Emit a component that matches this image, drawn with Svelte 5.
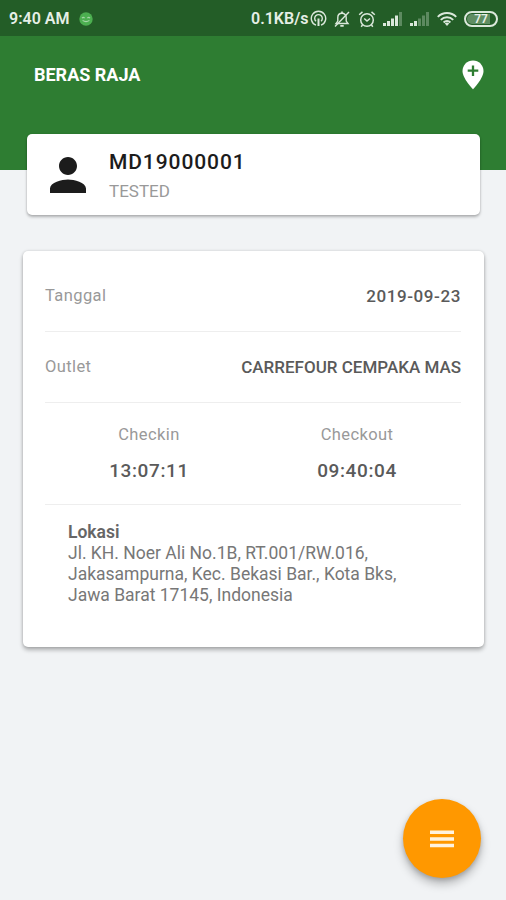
<script>
  let time = '9:40 AM'
  let speed = '0.1KB/s'
  let battery = 77

  let title = 'BERAS RAJA'
  let user = { code: 'MD19000001', name: 'TESTED' }

  let rows = [
    { label: 'Tanggal', value: '2019-09-23' },
    { label: 'Outlet', value: 'CARREFOUR CEMPAKA MAS', tight: true },
  ]
  let checks = [
    { label: 'Checkin', value: '13:07:11' },
    { label: 'Checkout', value: '09:40:04' },
  ]
  let address = [
    'Jl. KH. Noer Ali No.1B, RT.001/RW.016,',
    'Jakasampurna, Kec. Bekasi Bar., Kota Bks,',
    'Jawa Barat 17145, Indonesia',
  ]

  // number of lit bars for each sim
  let sims = [4, 2]
</script>

<div class="screen">
  <div class="statusbar">
    <span class="time">{time}</span>
    <svg class="dot" width="14" height="14" viewBox="0 0 14 14">
      <circle cx="7" cy="7" r="6.7" fill="#4caf50" />
      <path d="M3 6.2q1.3-1.6 2.6 0M8.4 6.2q1.3-1.6 2.6 0M3.6 8.4q3.4 2.4 6.8 0" fill="none" stroke="#a5d6a7" stroke-width="1.1" />
    </svg>
    <span class="speed">{speed}</span>
    <div class="icons">
      <svg class="cast" width="17" height="17" viewBox="0 0 17 17" fill="none" stroke="#dbe8db" stroke-width="1.4">
        <path d="M6 15.2a7.2 7.2 0 1 1 5 0" />
        <path d="M6 11.3a3.8 3.8 0 1 1 5 0" />
        <path d="M8.5 8.5v7.5" stroke-width="2" />
      </svg>
      <svg class="bell" width="18" height="18" viewBox="0 0 18 18" fill="none" stroke="#dbe8db" stroke-width="1.4">
        <path d="M3 13.5h12l-1.8-2.4V7.6C13.200 5 11.500 3.300 9 3.300S4.800 5 4.800 7.600v3.500z" />
        <path d="M7.300 15.800h3.400M9 1.500v1.800" stroke-width="1.7" />
        <path d="M2 16.500L16 2" />
      </svg>
      <svg class="alarm" width="18" height="18" viewBox="0 0 18 18" fill="none" stroke="#dbe8db" stroke-width="1.5">
        <circle cx="9" cy="10" r="6.300" />
        <path d="M6.200 8.500L9 11l3-2.500M1.200 4.800l3.300-2.900M16.800 4.800l-3.300-2.900M4.500 15l-1.300 1.700M13.500 15l1.300 1.700" />
      </svg>
      {#each sims as lit}
        <svg class="signal" width="20" height="14" viewBox="0 0 20 14" fill="#dbe8db">
          {#each [3, 5, 7.5, 10.500, 14] as h, i}
            <rect x={i * 4} y={14 - h} width="3" height={h} opacity={i < lit ? 1 : 0.32} />
          {/each}
        </svg>
      {/each}
      <svg class="wifi" width="20" height="14" viewBox="0 0 20 14" fill="none" stroke="#dbe8db" stroke-width="2">
        <path d="M.8 4.900a13 13 0 0 1 18.400 0M3.800 7.900a8.800 8.800 0 0 1 12.400 0M6.600 10.500a4.800 4.800 0 0 1 6.800 0" />
        <path d="M7.800 11.600L10 14l2.200-2.400a3.200 3.200 0 0 0-4.400 0z" fill="#dbe8db" stroke="none" />
      </svg>
      <div class="battery">
        <div class="level" style="width: {battery}%"></div>
        <span>{battery}</span>
      </div>
    </div>
  </div>

  <header>
    <h1>{title}</h1>
    <svg class="pin" width="22" height="30" viewBox="0 0 22 30">
      <path d="M11 .5C5.200.5.500 5.200.500 11c0 7.600 10.500 18.300 10.500 18.300S21.500 18.600 21.500 11C21.500 5.200 16.800.500 11 .500z" fill="#fff" />
      <path d="M11 5.500v10.500M5.700 10.700h10.600" stroke="#2e7d32" stroke-width="2.300" />
    </svg>
  </header>

  <div class="card profile">
    <svg width="36" height="36" viewBox="4 4 16 16" fill="#1c1c1c">
      <path d="M12 12c2.210 0 4-1.790 4-4s-1.790-4-4-4-4 1.790-4 4 1.790 4 4 4zm0 2c-2.670 0-8 1.340-8 4v2h16v-2c0-2.660-5.330-4-8-4z" />
    </svg>
    <div>
      <div class="code">{user.code}</div>
      <div class="name">{user.name}</div>
    </div>
  </div>

  <div class="card detail">
    {#each rows as row}
      <div class="row">
        <span class="label">{row.label}</span>
        <span class="value" class:tight={row.tight}>{row.value}</span>
      </div>
    {/each}
    <div class="checks">
      {#each checks as check}
        <div class="check">
          <div class="label">{check.label}</div>
          <div class="clock">{check.value}</div>
        </div>
      {/each}
    </div>
    <div class="location">
      <b>Lokasi</b>
      {#each address as line}
        <div>{line}</div>
      {/each}
    </div>
  </div>

  <button class="fab" aria-label="Menu">
    <svg width="24" height="18" viewBox="0 0 24 18" fill="#fff3e0">
      <path d="M0 .500h24v3.500H0zM0 7.200h24v3.500H0zM0 13.800h24v3.500H0z" />
    </svg>
  </button>
</div>

<style>
  :global(body) {
    background: #f1f3f4;
  }
  .screen {
    position: relative;
    width: 506px;
    height: 900px;
    overflow: hidden;
    background: #f1f3f5;
    font-family: Roboto, sans-serif;
  }

  .statusbar {
    display: flex;
    align-items: center;
    box-sizing: border-box;
    height: 36px;
    padding: 1px 8px 0 9px;
    background: #235d27;
    color: #e6efe6;
    font-size: 16px;
    font-weight: 600;
    white-space: nowrap;
  }
  .time {
    width: 61px;
  }
  .dot {
    margin-left: 9px;
  }
  .speed {
    margin-left: auto;
    width: 56px;
  }
  .icons {
    display: flex;
    align-items: center;
  }
  .cast {
    margin-left: 3px;
  }
  .bell {
    margin-left: 6px;
  }
  .alarm {
    margin-left: 7px;
  }
  .signal {
    margin-left: 7px;
  }
  .wifi {
    margin-left: 7px;
  }
  .battery {
    position: relative;
    box-sizing: border-box;
    width: 34px;
    height: 16px;
    margin-left: 7px;
    border: 2px solid #dbe8db;
    border-radius: 8px;
    overflow: hidden;
    text-align: center;
    font-size: 12px;
    line-height: 12px;
  }
  .level {
    position: absolute;
    top: 1px;
    bottom: 1px;
    left: 1px;
    border-radius: 5px 0 0 5px;
    background: #5f8d62;
  }
  .battery span {
    position: relative;
  }

  header {
    display: flex;
    align-items: flex-start;
    justify-content: space-between;
    box-sizing: border-box;
    height: 134px;
    padding: 24px 22px 0 34px;
    background: #2e7d32;
  }
  h1 {
    margin: 4px 0 0;
    color: #fff;
    font-size: 18px;
    font-weight: 700;
    line-height: 22px;
  }

  .card {
    position: relative;
    box-sizing: border-box;
    background: #fff;
    border-radius: 5px;
    box-shadow: 0 2px 3px rgba(0, 0, 0, 0.27), 0 0 2px rgba(0, 0, 0, 0.12);
  }
  .profile {
    display: flex;
    align-items: flex-start;
    width: 453px;
    height: 81px;
    margin: -36px 0 0 27px;
    padding: 14px 0 0 23px;
  }
  .profile svg {
    margin: 9px 23px 0 0;
  }
  .code {
    color: #1c1c1c;
    font-size: 21px;
    font-weight: 500;
    line-height: 28px;
    letter-spacing: 0.9px;
  }
  .name {
    margin-top: 5px;
    color: #999;
    font-size: 17px;
    line-height: 20px;
  }

  .detail {
    width: 461px;
    height: 396px;
    margin: 36px 0 0 23px;
    padding: 10px 23px 0 22px;
    box-shadow: 0 3px 4px rgba(0, 0, 0, 0.28), 0 0 3px rgba(0, 0, 0, 0.15);
  }
  .row {
    display: flex;
    align-items: center;
    justify-content: space-between;
    height: 70px;
    border-bottom: 1px solid #eee;
  }
  .label {
    color: #999;
    font-size: 16.500px;
    line-height: 20px;
    letter-spacing: 0.4px;
  }
  .value {
    color: #5a5a5a;
    font-size: 17px;
    font-weight: 500;
    letter-spacing: 0.6px;
  }
  .tight {
    letter-spacing: 0;
  }
  .checks {
    display: flex;
    height: 101px;
    border-bottom: 1px solid #eee;
  }
  .check {
    flex: 1;
    padding-top: 22px;
    text-align: center;
  }
  .clock {
    margin-top: 14px;
    color: #5a5a5a;
    font-size: 19px;
    font-weight: 500;
    line-height: 24px;
    letter-spacing: 0.6px;
  }
  .location {
    padding: 17px 0 0 23px;
    color: #777;
    font-size: 17.500px;
    line-height: 21px;
    white-space: nowrap;
  }
  .location b {
    display: block;
    color: #666;
    font-weight: 600;
  }

  .fab {
    position: absolute;
    right: 25px;
    bottom: 22px;
    display: flex;
    align-items: center;
    justify-content: center;
    width: 78px;
    height: 79px;
    padding: 0;
    border: none;
    border-radius: 50%;
    background: #ff9800;
    box-shadow: 0 6px 10px rgba(0, 0, 0, 0.25), 0 2px 4px rgba(0, 0, 0, 0.15);
  }
</style>
